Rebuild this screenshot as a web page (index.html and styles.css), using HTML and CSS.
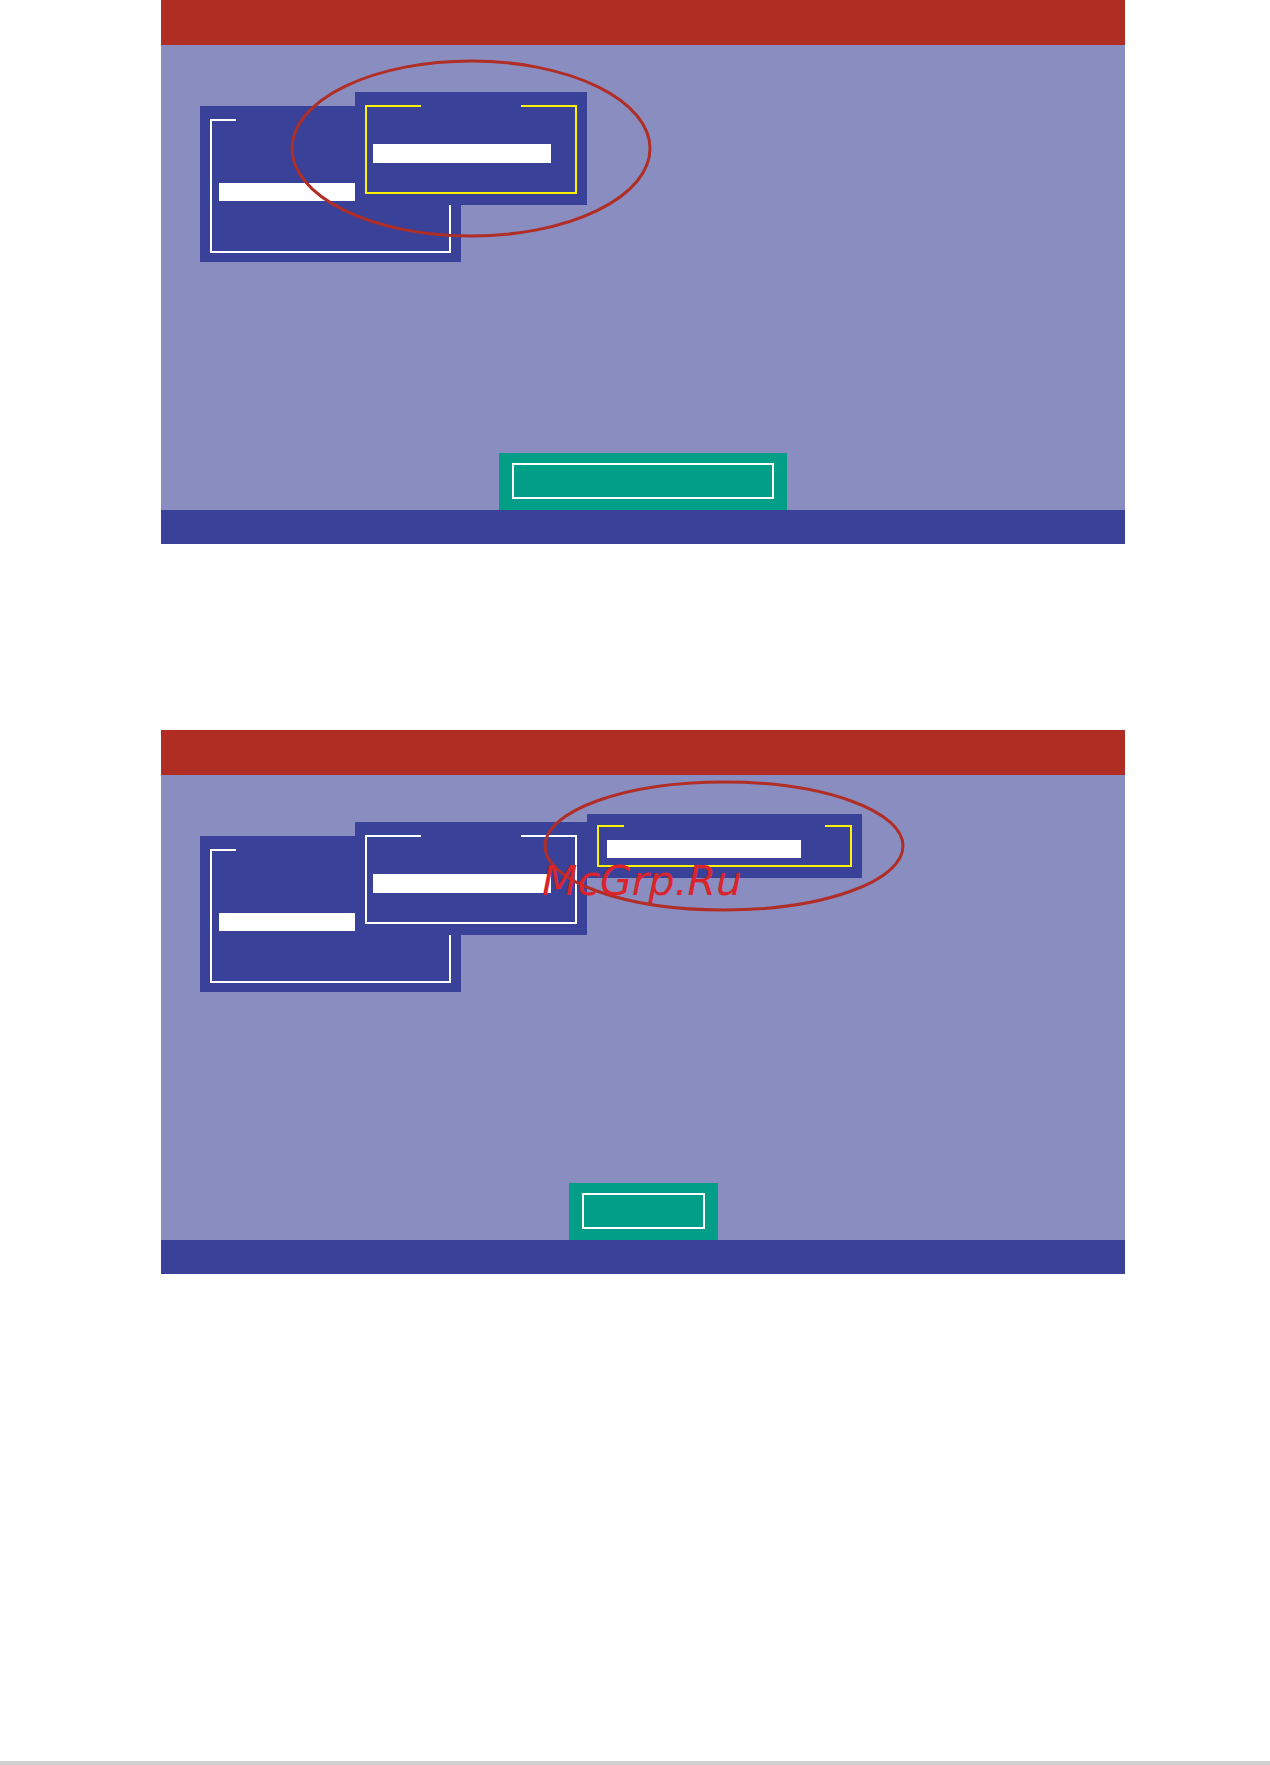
FILE: index.html
```html
<!DOCTYPE html>
<html lang="en">
<head>
<meta charset="UTF-8">
<meta name="viewport" content="width=device-width, initial-scale=1.0">
<title>Setup Utility</title>
<link rel="stylesheet" href="styles.css">
</head>
<body>

<!-- step 1: second level menu opened -->
<div class="screen">
    <div class="screen-head"></div>
    <div class="screen-body">
        <div class="win win-a">
            <div class="frame">
                <span class="frame-title"></span>
                <div class="item"></div>
            </div>
        </div>
        <div class="win win-b">
            <div class="frame is-active">
                <span class="frame-title"></span>
                <div class="item"></div>
            </div>
        </div>
        <svg class="mark" width="964" height="465">
            <ellipse cx="310" cy="103.5" rx="179" ry="87.5"></ellipse>
        </svg>
        <div class="btn-ok btn-wide"><span></span></div>
    </div>
    <div class="screen-foot"></div>
</div>

<!-- step 2: third level menu opened -->
<div class="screen screen-next">
    <div class="screen-head"></div>
    <div class="screen-body">
        <div class="win win-a">
            <div class="frame">
                <span class="frame-title"></span>
                <div class="item"></div>
            </div>
        </div>
        <div class="win win-b">
            <div class="frame">
                <span class="frame-title"></span>
                <div class="item"></div>
            </div>
        </div>
        <div class="win win-c">
            <div class="frame is-active">
                <span class="frame-title"></span>
                <div class="item"></div>
            </div>
        </div>
        <svg class="mark" width="964" height="465">
            <ellipse cx="563" cy="71" rx="179" ry="64"></ellipse>
        </svg>
        <div class="watermark">McGrp.Ru</div>
        <div class="btn-ok btn-small"><span></span></div>
    </div>
    <div class="screen-foot"></div>
</div>

<div class="page-edge"></div>

</body>
</html>
```

FILE: styles.css
```css
body {
    margin: 0;
    min-height: 1765px;
    background-color: #ffffff;
    display: flex;
    flex-direction: column;
    font-family: "DejaVu Sans", sans-serif;
}
.screen {
    width: 964px;
    margin-left: 161px;
}
.screen-next {
    margin-top: 186px;
}
.screen-head {
    height: 45px;
    background-color: #b02d24;
}
.screen-body {
    position: relative;
    height: 465px;
    background-color: #8a8dc0;
    display: flex;
    justify-content: center;
    align-items: flex-end;
}
.screen-foot {
    height: 34px;
    background-color: #3a4199;
}

/* menu windows */
.win {
    position: absolute;
    display: flex;
    box-sizing: border-box;
    background-color: #3a4199;
}
.win-a {
    left: 39px;
    top: 61px;
    width: 261px;
    height: 156px;
    padding: 13px 10px 9px 10px;
}
.win-b {
    left: 194px;
    top: 47px;
    width: 232px;
    height: 113px;
    padding: 13px 10px 11px 10px;
}
.win-c {
    left: 426px;
    top: 39px;
    width: 275px;
    height: 64px;
    padding: 11px 10px 11px 10px;
}
.frame {
    position: relative;
    flex: 1;
    border: 2px solid #ffffff;
}
.frame.is-active {
    border-color: #fff200;
}
.frame-title {
    position: absolute;
    top: -2px;
    height: 2px;
    background-color: #3a4199;
}
.win-a .frame-title { left: 24px; width: 180px; }
.win-b .frame-title { left: 54px; width: 100px; }
.win-c .frame-title { left: 25px; width: 201px; }

.item {
    background-color: #ffffff;
}
.win-a .item { margin: 62px 0 0 7px; width: 150px; height: 18px; }
.win-b .item { margin: 37px 0 0 6px; width: 178px; height: 19px; }
.win-c .item { margin: 13px 0 0 8px; width: 194px; height: 18px; }

/* highlight ring */
.mark {
    position: absolute;
    left: 0;
    top: 0;
    pointer-events: none;
}
.mark ellipse {
    fill: none;
    stroke: #b02e25;
    stroke-width: 3;
}

.watermark {
    position: absolute;
    left: 381px;
    top: 86px;
    font-size: 41px;
    line-height: 41px;
    font-style: italic;
    color: #d8242a;
}

/* OK button */
.btn-ok {
    background-color: #029e88;
    padding: 10px 13px 11px 13px;
}
.btn-ok span {
    display: block;
    height: 36px;
    border: 2px solid #ffffff;
    box-sizing: border-box;
}
.btn-wide span { width: 262px; }
.btn-small span { width: 123px; }

.page-edge {
    margin-top: auto;
    height: 4px;
    background-color: #d0d0d0;
}
```
